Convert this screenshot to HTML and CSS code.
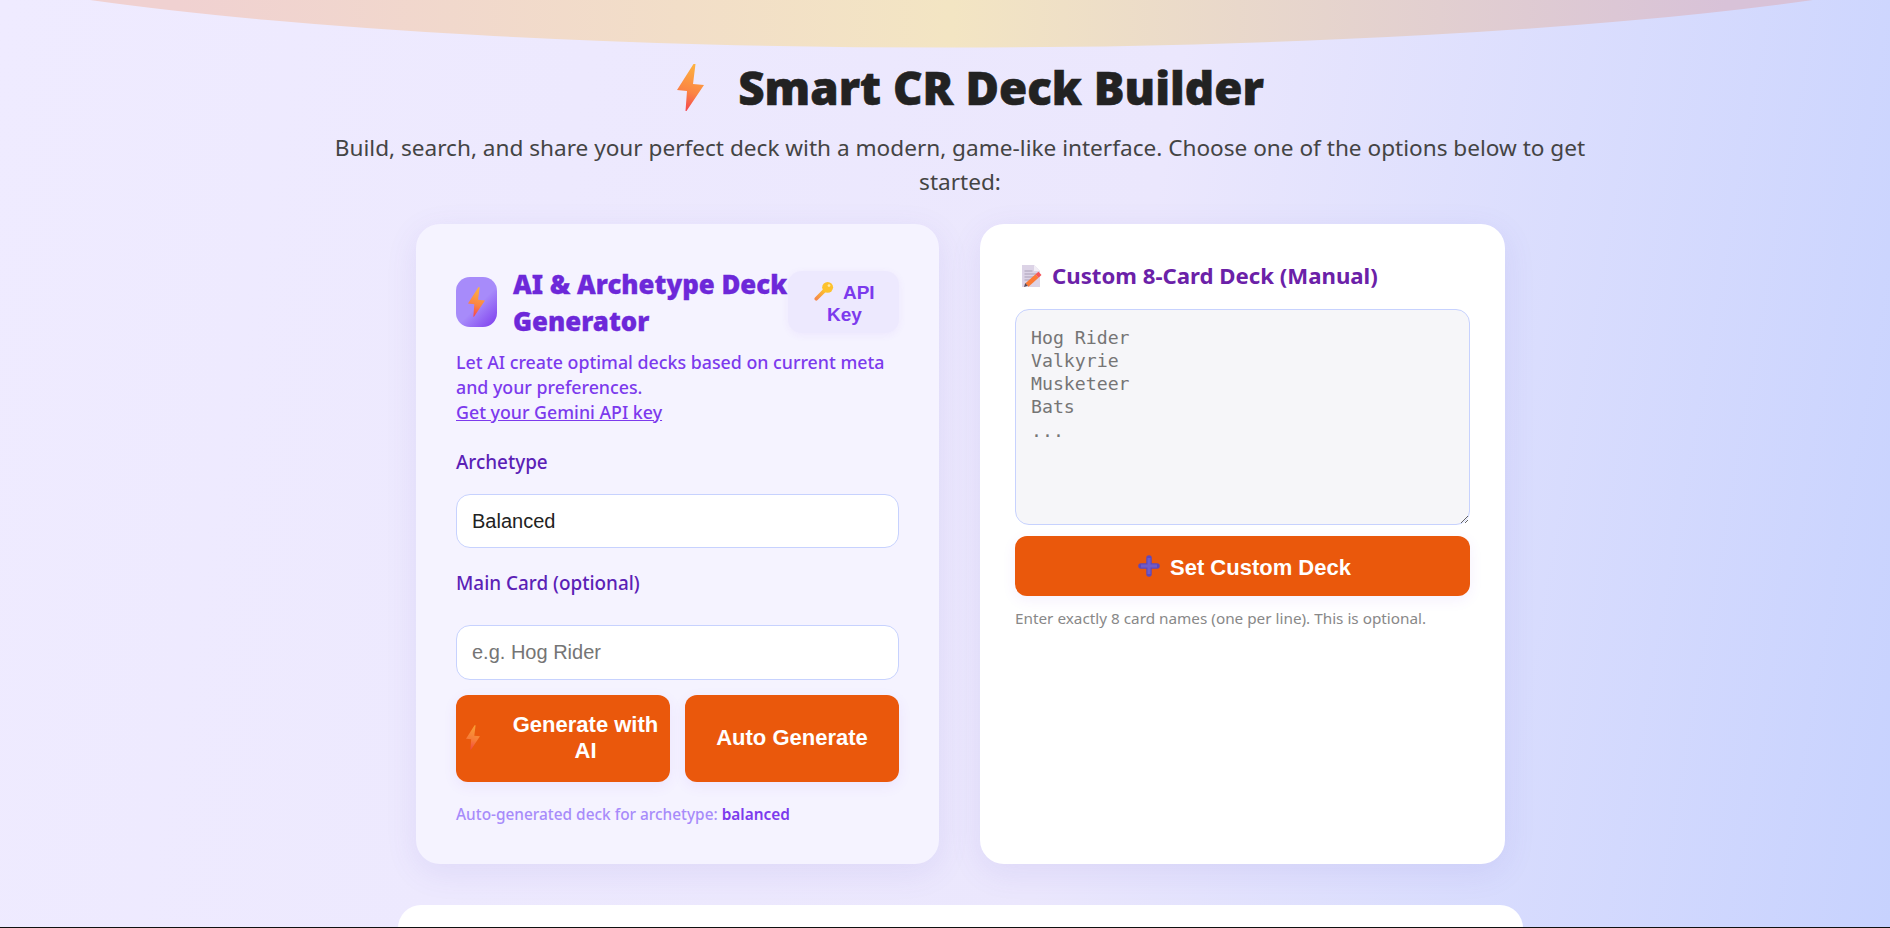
FILE: index.html
```html
<!DOCTYPE html>
<html>
<head>
    <title>Smart CR Deck Builder</title>
    <link rel="stylesheet" href="styles.css">
</head>
<body>
    <svg class="top-glow" viewBox="0 0 1890 48"><defs><linearGradient id="glow"><stop offset="0.05" stop-color="#f0d1d1"/><stop offset="0.5" stop-color="#f3e5c3"/><stop offset="0.95" stop-color="#d8c2d8"/></linearGradient></defs><path fill="url(#glow)" d="M90 0A1134 136 0 0 0 1813 0Z"/></svg>

    <header class="page-head">
        <h1>
            <svg class="title-bolt" viewBox="0 0 27 47"><defs><linearGradient id="bolt1" x1="0.6" y1="0" x2="0.4" y2="1"><stop offset="0" stop-color="#fdb23f"/><stop offset="0.6" stop-color="#fb8444"/><stop offset="1" stop-color="#f4474f"/></linearGradient></defs><path fill="url(#bolt1)" d="M16.5 0h2L16 20l11 1L9.5 47h-1L10 27 0 26z"/></svg>
            <span>Smart CR Deck Builder</span>
        </h1>
        <p class="subtitle">Build, search, and share your perfect deck with a modern, game-like interface. Choose one of the options below to get started:</p>
    </header>

    <div class="cards">
        <section class="card card-ai">
            <div class="ai-head">
                <div class="ai-icon">
                    <svg viewBox="0 0 27 47"><defs><linearGradient id="bolt2" x1="0.6" y1="0" x2="0.4" y2="1"><stop offset="0" stop-color="#fdb23f"/><stop offset="0.6" stop-color="#fb8444"/><stop offset="1" stop-color="#f4474f"/></linearGradient></defs><path fill="url(#bolt2)" d="M16.5 0h2L16 20l11 1L9.5 47h-1L10 27 0 26z"/></svg>
                </div>
                <h2>AI &amp; Archetype Deck Generator</h2>
                <button class="api-btn">
                    <svg class="key-icon" viewBox="0 0 22 22"><defs><linearGradient id="keyg" x1="0" y1="1" x2="1" y2="0"><stop offset="0" stop-color="#f58a4a"/><stop offset="1" stop-color="#fdc22d"/></linearGradient></defs><path fill="none" stroke="url(#keyg)" stroke-width="4" stroke-linecap="round" d="M2.5 19.5 12 10"/><circle cx="15" cy="7" r="6" fill="#fdc22d"/><circle cx="16.5" cy="5" r="1.5" fill="#ffe9a8"/></svg>
                    API Key
                </button>
            </div>
            <p class="ai-desc">Let AI create optimal decks based on current meta and your preferences.<br><a href="#">Get your Gemini API key</a></p>

            <label class="field-label label-arch">Archetype</label>
            <input class="field field-arch" type="text" value="Balanced">

            <label class="field-label label-main">Main Card (optional)</label>
            <input class="field field-main" type="text" placeholder="e.g. Hog Rider">

            <div class="btn-row">
                <button class="btn btn-ai">
                    <svg class="btn-bolt" viewBox="0 0 27 47"><defs><linearGradient id="bolt3" x1="0.6" y1="0" x2="0.4" y2="1"><stop offset="0" stop-color="#fdb23f"/><stop offset="0.6" stop-color="#fb8444"/><stop offset="1" stop-color="#f4474f"/></linearGradient></defs><path fill="url(#bolt3)" d="M16.5 0h2L16 20l11 1L9.5 47h-1L10 27 0 26z"/></svg>
                    <span>Generate with AI</span>
                </button>
                <button class="btn">Auto Generate</button>
            </div>
            <p class="ai-hint">Auto-generated deck for archetype: <strong>balanced</strong></p>
        </section>

        <section class="card card-custom">
            <h3>
                <svg class="memo-icon" viewBox="0 0 20 22"><path fill="#dcd3e6" d="M0 0h12l6 6v16H0z"/><path fill="#f2eef6" d="M12 0l6 6h-6z"/><path stroke="#a9a0b6" stroke-width="1.2" d="M2.5 6h8M2.5 9h12M2.5 12h10M2.5 15h6"/><path stroke="#fb7a35" stroke-width="4.5" d="M5 20 15 11"/><path stroke="#f5555a" stroke-width="4.5" d="M15 11l3-2.7"/><path fill="#5b4a55" d="M2 22l1.2-4 2.6 2.8z"/></svg>
                <span>Custom 8-Card Deck (Manual)</span>
            </h3>
            <textarea class="deck-text" placeholder="Hog Rider&#10;Valkyrie&#10;Musketeer&#10;Bats&#10;..."></textarea>
            <button class="btn btn-set">
                <svg class="plus-icon" viewBox="0 0 22 22"><path stroke="#5f48bb" stroke-width="5.5" stroke-linecap="round" d="M11 3v16M3 11h16"/><path stroke="#705cc9" stroke-width="3" d="M11 3v16M3 11h16"/></svg>
                Set Custom Deck
            </button>
            <p class="custom-hint">Enter exactly 8 card names (one per line). This is optional.</p>
        </section>
    </div>

    <div class="panel"></div>
    <div class="bottom-line"></div>
</body>
</html>
```

FILE: styles.css
```css
html, body { height: 100%; }
body { margin: 0; height: 928px; box-sizing: border-box; padding-left: 30px; overflow: hidden; position: relative; font-family: "Noto Sans", "Open Sans", sans-serif; background: linear-gradient(100deg, #efebff 0%, #ebe7fd 58%, #c7d2fe 100%); color: #222; }

.top-glow { position: absolute; left: 0; top: 0; width: 1890px; height: 48px; }

.page-head { position: relative; text-align: center; }
h1 { margin: 0; padding-top: 60px; height: 55px; display: flex; justify-content: center; align-items: center; gap: 34px; font-size: 45.7px; font-weight: 900; line-height: 55px; color: #222; padding-left: 21px; -webkit-text-stroke: 0.6px #222; }
.title-bolt { width: 27px; height: 47px; }
.subtitle { width: 1280px; margin: 16px auto 0; font-size: 22.6px; line-height: 33.5px; color: #444; }

.cards { position: relative; width: 1089px; margin: 26px 0 0 386px; display: grid; grid-template-columns: 523px 525px; gap: 41px; }
.card { border-radius: 24px; box-shadow: 0 8px 32px rgba(99, 76, 200, 0.1); height: 640px; box-sizing: border-box; }
.card-ai { background: #f5f3ff; padding: 41px 40px 0; }
.card-custom { background: #fff; padding: 34px 35px 0; }

.ai-head { display: flex; align-items: center; height: 74px; }
.ai-icon { width: 41px; height: 50px; flex: none; border-radius: 14px; background: linear-gradient(135deg, #a78bfa 55%, #7c3aed 100%); display: flex; align-items: center; justify-content: center; margin-right: 16px; }
.ai-icon svg { width: 17px; height: 30px; }
.ai-head h2 { flex: 1; margin: 0 -6px 0 0; padding-top: 2px; font-size: 25.8px; font-weight: 900; line-height: 37.5px; color: #6d28d9; -webkit-text-stroke: 0.3px #6d28d9; }
.api-btn { flex: none; position: relative; width: 111px; height: 62px; border: none; border-radius: 14px; padding: 2px 8px 0 10px; background: #ede9fe; box-shadow: 0 2px 8px rgba(124, 58, 237, 0.06); font-family: "Liberation Sans", Arial, sans-serif; font-size: 19px; font-weight: 700; line-height: 22px; color: #7c3aed; }
.key-icon { width: 20px; height: 20px; margin-right: 4px; vertical-align: -2px; }

.ai-desc { margin: 11px 0 0; font-size: 17.8px; font-weight: 500; line-height: 25px; color: #7c3aed; }
.ai-desc a { color: #7c3aed; }

.field-label { display: block; font-size: 18.9px; font-weight: 500; line-height: 25px; color: #5b21b6; }
.label-arch { margin-top: 25px; }
.label-main { margin-top: 23px; }
.field { display: block; width: 100%; box-sizing: border-box; border: 1.5px solid #c7d2fe; border-radius: 14px; padding: 0 15px; background: #fff; font-family: "Liberation Sans", Arial, sans-serif; font-size: 20px; color: #222; outline: none; }
.field::placeholder { color: #757575; }
.field-arch { margin-top: 19px; height: 54px; }
.field-main { margin-top: 29px; height: 55px; }

.btn-row { display: grid; grid-template-columns: 1fr 1fr; gap: 15px; margin-top: 15px; }
.btn { border: none; border-radius: 12px; background: #ea580c; color: #fff; font-family: "Liberation Sans", Arial, sans-serif; font-size: 22px; font-weight: 700; line-height: 26px; box-shadow: 0 4px 14px rgba(124, 58, 237, 0.08); }
.btn-row .btn { height: 87px; padding: 0 10px 2px; }
.btn-ai { display: flex; align-items: center; text-align: center; }
.btn-ai span { flex: 1; padding: 0 0 0 24px; }
.btn-row .btn-ai { padding-right: 3px; }
.btn-bolt { width: 14px; height: 25px; opacity: 0.8; flex: none; }

.ai-hint { margin: 23px 0 0; font-size: 15.4px; font-weight: 500; line-height: 20px; color: #a78bfa; }
.ai-hint strong { font-weight: 600; color: #7c3aed; }

.card-custom h3 { margin: 0; display: flex; align-items: center; gap: 10px; padding-left: 7px; font-size: 22.2px; font-weight: 700; line-height: 36px; color: #6b21a8; }
.memo-icon { width: 20px; height: 22px; }
.deck-text { display: block; width: 100%; height: 216px; margin-top: 15px; box-sizing: border-box; border: 1.5px solid #c7d2fe; border-radius: 14px; padding: 15.5px 15px; background: #f6f6f9; font-family: "DejaVu Sans Mono", monospace; font-size: 18.2px; line-height: 23.3px; outline: none; }
.deck-text::placeholder { color: #757575; }
.btn-set { display: flex; align-items: center; justify-content: center; gap: 10px; width: 100%; height: 60px; margin-top: 11px; padding: 3px 0 0 4px; }
.plus-icon { width: 22px; height: 22px; margin-top: -3px; }
.custom-hint { margin: 12px 0 0; font-size: 15.3px; line-height: 20px; color: #888; }

.panel { position: relative; width: 1125px; height: 23px; margin: 41px 0 0 368px; border-radius: 24px 24px 0 0; background: #fff; }
.bottom-line { position: absolute; left: 0; right: 0; top: 927px; height: 1px; background: #111; }
```
